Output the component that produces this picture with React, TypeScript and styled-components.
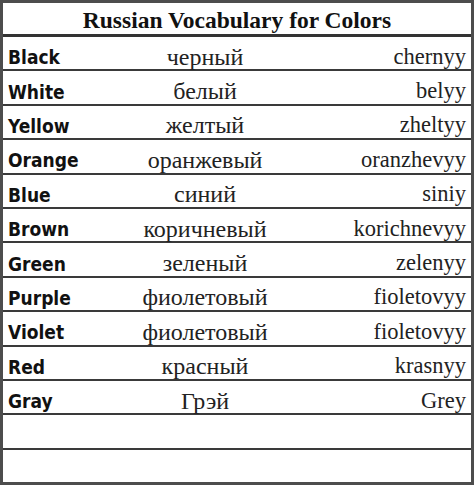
import { ReactElement } from "react";
import styled, { createGlobalStyle } from "styled-components";

const words = [
  { en: "Black", ru: "черный", tr: "chernyy" },
  { en: "White", ru: "белый", tr: "belyy" },
  { en: "Yellow", ru: "желтый", tr: "zheltyy" },
  { en: "Orange", ru: "оранжевый", tr: "oranzhevyy" },
  { en: "Blue", ru: "синий", tr: "siniy" },
  { en: "Brown", ru: "коричневый", tr: "korichnevyy" },
  { en: "Green", ru: "зеленый", tr: "zelenyy" },
  { en: "Purple", ru: "фиолетовый", tr: "fioletovyy" },
  { en: "Violet", ru: "фиолетовый", tr: "fioletovyy" },
  { en: "Red", ru: "красный", tr: "krasnyy" },
  { en: "Gray", ru: "Грэй", tr: "Grey" },
  { en: "", ru: "", tr: "" },
  { en: "", ru: "", tr: "" },
];

export default function App(): ReactElement {
  return (
    <>
      <GlobalStyle />
      <StyledTable>
        <StyledTitle>Russian Vocabulary for Colors</StyledTitle>
        {words.map((w, i) => (
          <StyledRow key={i} $last={i === words.length - 1}>
            <StyledEnglish>{w.en}</StyledEnglish>
            <StyledRussian>{w.ru}</StyledRussian>
            <StyledTranslit>{w.tr}</StyledTranslit>
          </StyledRow>
        ))}
      </StyledTable>
    </>
  );
}

const GlobalStyle = createGlobalStyle`
  html, body {
    margin: 0;
    padding: 0;
    background: #fff;
  }
`;

const StyledTable = styled.div`
  background: #fff;
  border: 3px solid #4d4d4d;
  box-sizing: border-box;
  display: flex;
  flex-direction: column;
  height: 485px;
  width: 474px;
`;

const StyledTitle = styled.div`
  align-items: center;
  border-bottom: 3px solid #333;
  box-sizing: border-box;
  color: #111;
  display: flex;
  flex: 0 0 34px;
  font-family: "Liberation Serif", serif;
  font-size: 23.5px;
  font-weight: bold;
  justify-content: center;
  padding-top: 3px;
`;

const StyledRow = styled.div<{ $last: boolean }>`
  align-items: center;
  border-bottom: ${(p) => (p.$last ? "none" : "2px solid #3a3a3a")};
  box-sizing: border-box;
  display: grid;
  flex: 1 1 0;
  grid-template-columns: 130px 1fr 194px;
  line-height: 24px;
  min-height: 0;
  padding-top: 7px;
`;

const StyledEnglish = styled.div`
  color: #111;
  font-family: "DejaVu Sans", sans-serif;
  font-size: 19px;
  font-stretch: condensed;
  font-weight: bold;
  padding-left: 5px;
  padding-top: 1px;
`;

const StyledRussian = styled.div`
  color: #222;
  font-family: "Liberation Serif", serif;
  font-size: 24px;
  text-align: center;
`;

const StyledTranslit = styled.div`
  color: #222;
  font-family: "Liberation Serif", serif;
  font-size: 22.5px;
  padding-right: 5px;
  text-align: right;
`;
